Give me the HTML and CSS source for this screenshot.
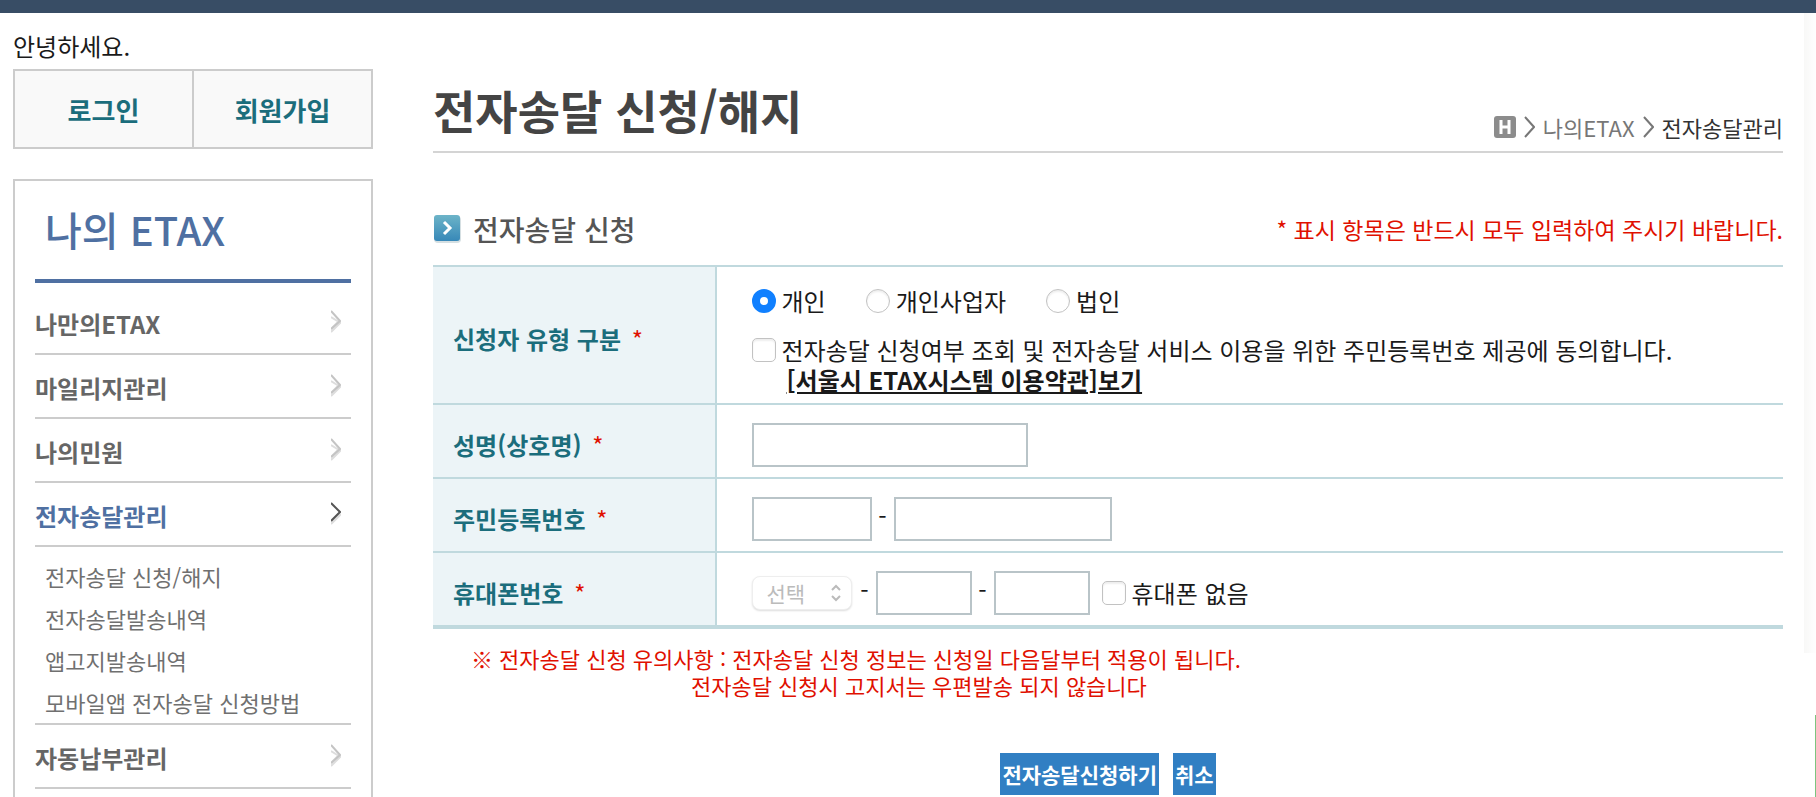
FILE: index.html
```html
<!DOCTYPE html>
<html lang="ko">
<head>
    <meta charset="UTF-8">
    <meta name="viewport" content="width=device-width, initial-scale=1.0">
    <title>전자송달 신청/해지</title>
    <link rel="stylesheet" href="styles.css">
</head>
<body>
    <div class="top-bar"></div>
    <div class="side-shade"></div>
    <div class="side-tab"></div>

    <div class="wrap">
        <!-- Left menu -->
        <aside class="sidebar">
            <p class="greeting">안녕하세요.</p>
            <div class="login-box">
                <a href="#">로그인</a>
                <a href="#">회원가입</a>
            </div>
            <nav class="menu">
                <h2>나의 ETAX</h2>
                <ul class="menu-list">
                    <li><a href="#">나만의ETAX <svg class="arrow" viewBox="0 0 10 24"><path class="shade" d="M0 7l8 5M0 22l10-10"/><path class="shade" d="M0 19l8-8"/><path d="M0 1l9 10-9 8"/></svg></a></li>
                    <li><a href="#">마일리지관리 <svg class="arrow" viewBox="0 0 10 24"><path class="shade" d="M0 7l8 5M0 22l10-10"/><path class="shade" d="M0 19l8-8"/><path d="M0 1l9 10-9 8"/></svg></a></li>
                    <li><a href="#">나의민원 <svg class="arrow" viewBox="0 0 10 24"><path class="shade" d="M0 7l8 5M0 22l10-10"/><path class="shade" d="M0 19l8-8"/><path d="M0 1l9 10-9 8"/></svg></a></li>
                    <li class="active"><a href="#">전자송달관리 <svg class="arrow" viewBox="0 0 10 24"><path class="shade" d="M0 22l10-10"/><path d="M0 1l9 9-9 9"/></svg></a></li>
                    <li>
                        <ul class="sub-list">
                            <li><a href="#">전자송달 신청/해지</a></li>
                            <li><a href="#">전자송달발송내역</a></li>
                            <li><a href="#">앱고지발송내역</a></li>
                            <li><a href="#">모바일앱 전자송달 신청방법</a></li>
                        </ul>
                    </li>
                    <li><a href="#">자동납부관리 <svg class="arrow" viewBox="0 0 10 24"><path class="shade" d="M0 7l8 5M0 22l10-10"/><path class="shade" d="M0 19l8-8"/><path d="M0 1l9 10-9 8"/></svg></a></li>
                </ul>
            </nav>
        </aside>

        <!-- Content -->
        <main class="content">
            <header class="page-head">
                <h1>전자송달 신청/해지</h1>
                <div class="location">
                    <a href="#" class="home" aria-label="홈"><svg viewBox="0 0 22 22"><rect width="22" height="22" rx="3" fill="#8c8c8c"/><path d="M7 4v14M15 4v14M7 11h8" stroke="#fff" stroke-width="3" fill="none"/></svg></a>
                    <svg class="step" viewBox="0 0 11 22"><path d="M1 1l9 10-9 10"/></svg>
                    <a href="#">나의ETAX</a>
                    <svg class="step" viewBox="0 0 11 22"><path d="M1 1l9 10-9 10"/></svg>
                    <strong>전자송달관리</strong>
                </div>
            </header>

            <form>
                <div class="section-head">
                    <h3>
                        <svg class="bullet" viewBox="0 0 28 28">
                            <defs><linearGradient id="bullet-bg" x1="0" y1="0" x2="0" y2="1"><stop offset="0" stop-color="#6db4c8"/><stop offset="1" stop-color="#3788b8"/></linearGradient></defs>
                            <rect x="1" y="1" width="27" height="27" rx="4" fill="#d5dfe2"/>
                            <rect x="1" y="0" width="26" height="26" rx="3" fill="url(#bullet-bg)"/>
                            <path d="M11 7l6 6-6 6" fill="none" stroke="#fff" stroke-width="3"/>
                        </svg>
                        전자송달 신청
                    </h3>
                    <p>* 표시 항목은 반드시 모두 입력하여 주시기 바랍니다.</p>
                </div>

                <table class="form-table">
                    <tr class="tall">
                        <th scope="row">신청자 유형 구분 <em>*</em></th>
                        <td>
                            <div class="row types">
                                <label><input type="radio" name="type" checked>개인</label>
                                <label><input type="radio" name="type">개인사업자</label>
                                <label><input type="radio" name="type">법인</label>
                            </div>
                            <div class="row agree">
                                <label><input type="checkbox">전자송달 신청여부 조회 및 전자송달 서비스 이용을 위한 주민등록번호 제공에 동의합니다.</label>
                            </div>
                            <a href="#" class="terms">[서울시 ETAX시스템 이용약관]보기</a>
                        </td>
                    </tr>
                    <tr>
                        <th scope="row"><label for="name">성명(상호명) <em>*</em></label></th>
                        <td><div class="row"><input type="text" id="name" class="w-name"></div></td>
                    </tr>
                    <tr>
                        <th scope="row"><label for="jumin1">주민등록번호 <em>*</em></label></th>
                        <td>
                            <div class="row">
                                <input type="text" id="jumin1" class="w-jumin1">
                                <span class="dash">-</span>
                                <input type="text" class="w-jumin2" aria-label="주민등록번호 뒷자리">
                            </div>
                        </td>
                    </tr>
                    <tr>
                        <th scope="row"><label for="phone1">휴대폰번호 <em>*</em></label></th>
                        <td>
                            <div class="row">
                                <span class="select-box">
                                    <select id="phone1" disabled><option>선택</option></select>
                                    <svg viewBox="0 0 12 18"><path d="M2 6l4-4 4 4M2 12l4 4 4-4"/></svg>
                                </span>
                                <span class="dash">-</span>
                                <input type="text" class="w-phone" aria-label="휴대폰번호 가운데자리">
                                <span class="dash">-</span>
                                <input type="text" class="w-phone" aria-label="휴대폰번호 끝자리">
                                <label class="no-phone"><input type="checkbox">휴대폰 없음</label>
                            </div>
                        </td>
                    </tr>
                </table>

                <div class="notice">
                    <p><span>※</span>전자송달 신청 유의사항 : 전자송달 신청 정보는 신청일 다음달부터 적용이 됩니다.</p>
                    <p class="second">전자송달 신청시 고지서는 우편발송 되지 않습니다</p>
                </div>

                <div class="buttons">
                    <button type="submit">전자송달신청하기</button>
                    <button type="button">취소</button>
                </div>
            </form>
        </main>
    </div>
</body>
</html>
```
FILE: styles.css
```css
* {
    box-sizing: border-box;
}

body {
    margin: 0;
    font-family: "Noto Sans CJK KR", "Noto Sans", sans-serif;
    font-size: 24px;
    color: #1a1a1a;
    background-color: #fff;
    height: 100vh;
    overflow: hidden;
    position: relative;
}

h1, h2, h3, p, ul {
    margin: 0;
    padding: 0;
}

ul {
    list-style: none;
}

a {
    color: inherit;
    text-decoration: none;
}

input, select, button {
    font-family: inherit;
    margin: 0;
}

.top-bar {
    height: 13px;
    background-color: #384d65;
}

.side-shade {
    position: absolute;
    top: 13px;
    right: 0;
    width: 12px;
    height: 640px;
    background: linear-gradient(to right, #f8f8f7, #fefefe);
}

.side-tab {
    position: absolute;
    top: 715px;
    right: 0;
    bottom: 0;
    width: 1px;
    background-color: #7cc47f;
}

.wrap {
    display: flex;
    gap: 60px;
    padding: 0 33px 0 13px;
}

/* Left menu */
.sidebar {
    flex: none;
    width: 360px;
}

.greeting {
    padding: 13px 0 3px;
    line-height: 40px;
}

.login-box {
    display: flex;
    height: 80px;
    border: 2px solid #ccc;
    background-color: #f9f9f9;
}

.login-box a {
    flex: 1;
    display: flex;
    align-items: center;
    justify-content: center;
    font-size: 26px;
    font-weight: 700;
    color: #1b6d7c;
}

.login-box a + a {
    border-left: 2px solid #ccc;
}

.menu {
    margin-top: 30px;
    padding: 0 20px 40px;
    border: 2px solid #ccc;
}

.menu h2 {
    height: 102px;
    padding-left: 10px;
    border-bottom: 4px solid #4f70a2;
    font-size: 40px;
    font-weight: 500;
    line-height: 96px;
    color: #4f70a2;
}

.menu-list {
    padding-top: 8px;
}

.menu-list > li {
    border-bottom: 2px solid #ccc;
}

.menu-list > li > a {
    display: flex;
    align-items: center;
    justify-content: space-between;
    height: 62px;
    padding: 2px 10px 0 0;
    font-weight: 700;
    color: #666;
}

.menu-list > .active > a {
    color: #4f70a2;
}

.arrow {
    width: 10px;
    height: 24px;
    margin-bottom: 2px;
    fill: none;
    stroke: #c4c4c4;
    stroke-width: 2;
}

.arrow .shade {
    stroke: #ddd;
}

.active .arrow {
    stroke: #555;
}

.sub-list {
    padding: 8px 0 2px 10px;
    font-size: 22px;
    line-height: 42px;
    color: #707070;
}

.sub-list li:last-child {
    height: 40px;
}

/* Content */
.content {
    flex: 1;
}

.page-head {
    display: flex;
    align-items: flex-end;
    justify-content: space-between;
    height: 140px;
    border-bottom: 2px solid #d4d4d4;
}

.page-head h1 {
    padding-bottom: 2px;
    font-size: 46px;
    font-weight: 700;
    line-height: 80px;
    color: #444;
}

.location {
    display: flex;
    align-items: center;
    gap: 8px;
    padding-bottom: 8px;
    font-size: 22px;
    line-height: 32px;
    color: #777;
}

.location strong {
    font-weight: 400;
    color: #333;
}

.home svg {
    display: block;
    width: 22px;
    height: 22px;
}

.step {
    width: 11px;
    height: 22px;
    fill: none;
    stroke: #777;
    stroke-width: 2;
}

.section-head {
    display: flex;
    align-items: center;
    justify-content: space-between;
    padding: 55px 0 15px;
}

.section-head h3 {
    display: flex;
    align-items: center;
    gap: 12px;
    font-size: 28px;
    font-weight: 500;
    line-height: 42px;
    color: #555;
}

.section-head p {
    font-size: 23px;
    line-height: 40px;
    color: #e01000;
}

.bullet {
    width: 28px;
    height: 28px;
}

.form-table {
    width: 100%;
    border-collapse: separate;
    border-spacing: 0;
    border-top: 2px solid #c0d9de;
    border-bottom: 2px solid #c0d9de;
}

.form-table th, .form-table td {
    height: 74px;
    padding: 0;
    border-bottom: 2px solid #c0d9de;
    text-align: left;
}

.form-table .tall th, .form-table .tall td {
    height: 138px;
}

.form-table th {
    width: 21%;
    padding: 6px 0 0 20px;
    border-right: 2px solid #c0d9de;
    background-color: #ecf4f7;
    font-weight: 700;
    color: #1b6d7c;
}

.form-table th em {
    margin-left: 4px;
    font-style: normal;
    font-weight: 400;
    color: #e01000;
}

.form-table td {
    padding: 8px 0 0 35px;
}

.form-table .tall td {
    padding-top: 4px;
}

.row {
    display: flex;
    align-items: center;
}

.row label {
    display: flex;
    align-items: center;
    gap: 6px;
    line-height: 36px;
}

.types {
    gap: 40px;
}

.agree {
    padding-top: 13px;
}

.terms {
    display: block;
    margin-left: 35px;
    font-weight: 700;
    line-height: 24px;
    text-decoration: underline;
}

input[type="radio"], input[type="checkbox"] {
    appearance: none;
    flex: none;
    width: 24px;
    height: 24px;
    border: 1px solid #c2c2c2;
    border-radius: 5px;
    background-color: #fff;
    box-shadow: inset 0 2px 2px #eee;
}

input[type="radio"] {
    border-radius: 50%;
}

input[type="radio"]:checked {
    border: 8px solid #1080ff;
    box-shadow: none;
}

input[type="text"] {
    height: 44px;
    padding: 0 8px;
    border: 2px solid #b9c4c8;
    background-color: #fff;
    font-size: 24px;
}

.w-name {
    width: 276px;
}

.w-jumin1 {
    width: 120px;
}

.w-jumin2 {
    width: 218px;
}

.w-phone {
    width: 96px;
}

.dash {
    width: 22px;
    padding-bottom: 6px;
    line-height: 36px;
    text-align: center;
}

.select-box {
    position: relative;
    width: 102px;
}

.select-box select {
    appearance: none;
    display: block;
    width: 100px;
    height: 34px;
    padding: 0 14px;
    border: 1px solid #eee;
    border-radius: 8px;
    background-color: #fff;
    box-shadow: 0 1px 2px #ddd;
    font-size: 21px;
    line-height: 30px;
    color: #bbb;
    opacity: 1;
}

.select-box svg {
    position: absolute;
    top: 8px;
    right: 12px;
    width: 12px;
    height: 18px;
    fill: none;
    stroke: #bbb;
    stroke-width: 2;
    pointer-events: none;
}

.row .no-phone {
    margin-left: 12px;
}

.notice {
    padding: 16px 0 0 38px;
    font-size: 22px;
    line-height: 27px;
    color: #e01000;
}

.notice span {
    margin-right: 6px;
}

.notice .second {
    padding-left: 220px;
}

.buttons {
    display: flex;
    justify-content: center;
    gap: 14px;
    padding-top: 54px;
}

.buttons button {
    height: 42px;
    padding: 0 2px;
    border: none;
    background-color: #317fc3;
    color: #fff;
    font-size: 21px;
    font-weight: 700;
    cursor: pointer;
}
```
